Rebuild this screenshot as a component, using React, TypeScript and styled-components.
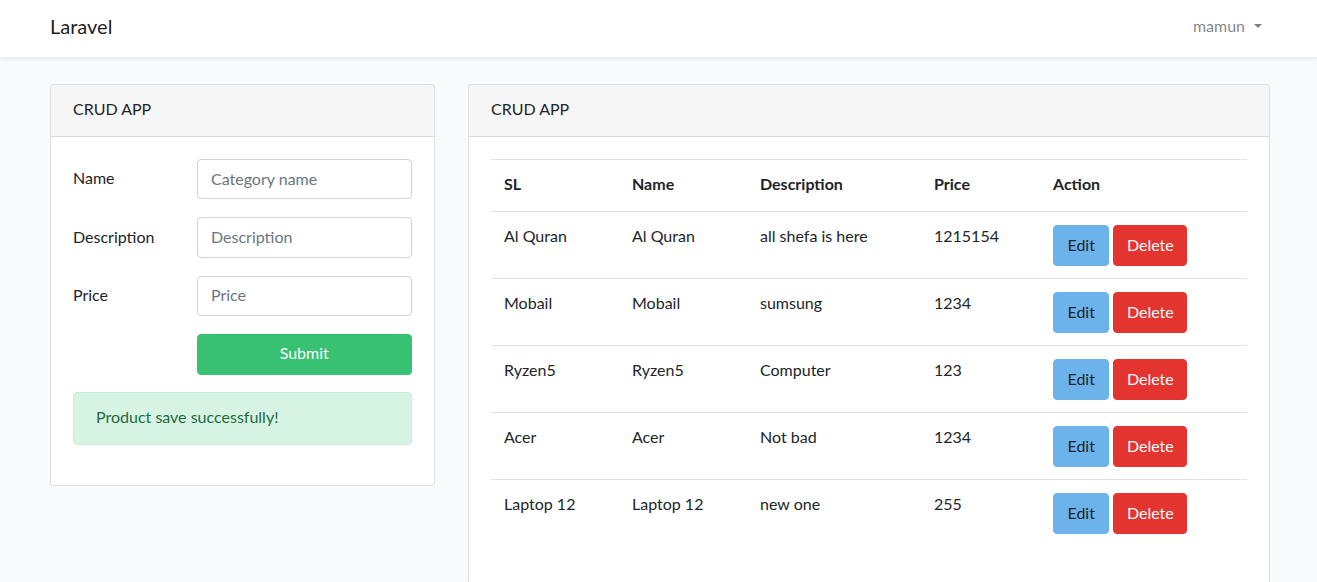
import * as React from "react";
import styled, { createGlobalStyle } from "styled-components";

type Product = { sl: string; name: string; description: string; price: string };

const products: Product[] = [
  { sl: "Al Quran", name: "Al Quran", description: "all shefa is here", price: "1215154" },
  { sl: "Mobail", name: "Mobail", description: "sumsung", price: "1234" },
  { sl: "Ryzen5", name: "Ryzen5", description: "Computer", price: "123" },
  { sl: "Acer", name: "Acer", description: "Not bad", price: "1234" },
  { sl: "Laptop 12", name: "Laptop 12", description: "new one", price: "255" },
];

const columns = [128, 128, 174, 119, 207];

export default function App() {
  return (
    <>
      <GlobalStyle />
      <Navbar>
        <NavInner>
          <Brand>Laravel</Brand>
          <UserToggle>mamun</UserToggle>
        </NavInner>
      </Navbar>
      <Main>
        <Card>
          <CardHeader>CRUD APP</CardHeader>
          <CardBody>
            <FormRow>
              <Label>Name</Label>
              <Input placeholder="Category name" />
            </FormRow>
            <FormRow>
              <Label>Description</Label>
              <Input placeholder="Description" />
            </FormRow>
            <FormRow>
              <Label>Price</Label>
              <Input placeholder="Price" />
            </FormRow>
            <FormRow>
              <span />
              <SubmitButton>Submit</SubmitButton>
            </FormRow>
            <Alert>Product save successfully!</Alert>
          </CardBody>
        </Card>
        <Card>
          <CardHeader>CRUD APP</CardHeader>
          <CardBody>
            <Table>
              <colgroup>
                {columns.map((w, i) => (
                  <col key={i} style={{ width: w }} />
                ))}
              </colgroup>
              <thead>
                <tr>
                  <Th>SL</Th>
                  <Th>Name</Th>
                  <Th>Description</Th>
                  <Th>Price</Th>
                  <Th>Action</Th>
                </tr>
              </thead>
              <tbody>
                {products.map((p, i) => (
                  <tr key={p.sl + i}>
                    <Td>{p.sl}</Td>
                    <Td>{p.name}</Td>
                    <Td>{p.description}</Td>
                    <Td>{p.price}</Td>
                    <Td>
                      <Actions>
                        <Button $variant="info">Edit</Button>
                        <Button $variant="danger">Delete</Button>
                      </Actions>
                    </Td>
                  </tr>
                ))}
              </tbody>
            </Table>
          </CardBody>
        </Card>
      </Main>
    </>
  );
}

const GlobalStyle = createGlobalStyle`
  * { box-sizing: border-box; }
  body {
    margin: 0;
    background: #f8fafc;
    color: #212529;
    font-family: Lato, "Noto Sans", sans-serif;
    font-size: 16px;
    line-height: 1.6;
    overflow: hidden;
  }
`;

const Navbar = styled.nav`
  background: #fff;
  box-shadow: 0 2px 4px rgba(0, 0, 0, 0.075);
  height: 57px;
  position: relative;
`;

const NavInner = styled.div`
  display: flex;
  align-items: center;
  justify-content: space-between;
  width: 1220px;
  height: 100%;
  margin-left: 50px;
  padding-bottom: 5px;
`;

const Brand = styled.a`
  font-size: 20px;
  color: rgba(0, 0, 0, 0.9);
`;

const UserToggle = styled.a`
  color: rgba(0, 0, 0, 0.5);
  padding: 0 8px;
  display: flex;
  align-items: center;
  &::after {
    content: "";
    margin-left: 9px;
    border-top: 4.8px solid;
    border-left: 4.6px solid transparent;
    border-right: 4.6px solid transparent;
  }
`;

const Main = styled.main`
  display: grid;
  grid-template-columns: 384.5px 1fr;
  gap: 33.5px;
  align-items: start;
  width: 1220px;
  margin-left: 50px;
  padding-top: 27px;
`;

const Card = styled.section`
  background: #fff;
  border: 1px solid rgba(0, 0, 0, 0.125);
  border-radius: 4px;
  overflow: hidden;
`;

const CardHeader = styled.div`
  background: rgba(0, 0, 0, 0.03);
  border-bottom: 1px solid rgba(0, 0, 0, 0.125);
  padding: 11px 22px 14px;
  line-height: 26px;
`;

const CardBody = styled.div`
  padding: 22px;
`;

const FormRow = styled.div`
  display: grid;
  grid-template-columns: 124px minmax(0, 1fr);
  align-items: center;
  margin-bottom: 18px;
`;

const Label = styled.label`
  padding-bottom: 2px;
`;

const Input = styled.input`
  width: 100%;
  min-width: 0;
  height: 40.4px;
  padding: 5px 13px 7px;
  border: 1px solid #ced4da;
  border-radius: 4px;
  font: inherit;
  color: #495057;
  &::placeholder {
    color: #6c757d;
  }
`;

const SubmitButton = styled.button`
  width: 100%;
  height: 40.6px;
  padding: 0 12px 3px;
  border: 1px solid #38c172;
  border-radius: 4px;
  background: #38c172;
  color: #fff;
  font: inherit;
`;

const Alert = styled.div`
  background: #d7f3e3;
  border: 1px solid #c7eed8;
  border-radius: 4px;
  color: #1f6b40;
  padding: 11px 22px 14px;
  line-height: 26px;
  margin-top: -1px;
  margin-bottom: 18px;
`;

const Table = styled.table`
  width: 100%;
  table-layout: fixed;
  border-collapse: collapse;
  margin-bottom: 16px;
`;

const Th = styled.th`
  text-align: left;
  font-weight: 700;
  padding: 11px 13px 14px;
  line-height: 26px;
  border-top: 1px solid #dee2e6;
`;

const Td = styled.td`
  vertical-align: top;
  padding: 11px 13px 14px;
  line-height: 26px;
  border-top: 1px solid #dee2e6;
`;

const Actions = styled.div`
  display: flex;
  gap: 4px;
  margin-top: 2px;
  margin-bottom: -2px;
`;

const Button = styled.button<{ $variant: "info" | "danger" }>`
  height: 41px;
  padding: 0 ${(p) => (p.$variant === "info" ? "13.5px" : "12.5px")} 2px;
  border-radius: 4px;
  font: inherit;
  border: 1px solid ${(p) => (p.$variant === "info" ? "#6cb2eb" : "#e3342f")};
  background: ${(p) => (p.$variant === "info" ? "#6cb2eb" : "#e3342f")};
  color: ${(p) => (p.$variant === "info" ? "#212529" : "#fff")};
`;
